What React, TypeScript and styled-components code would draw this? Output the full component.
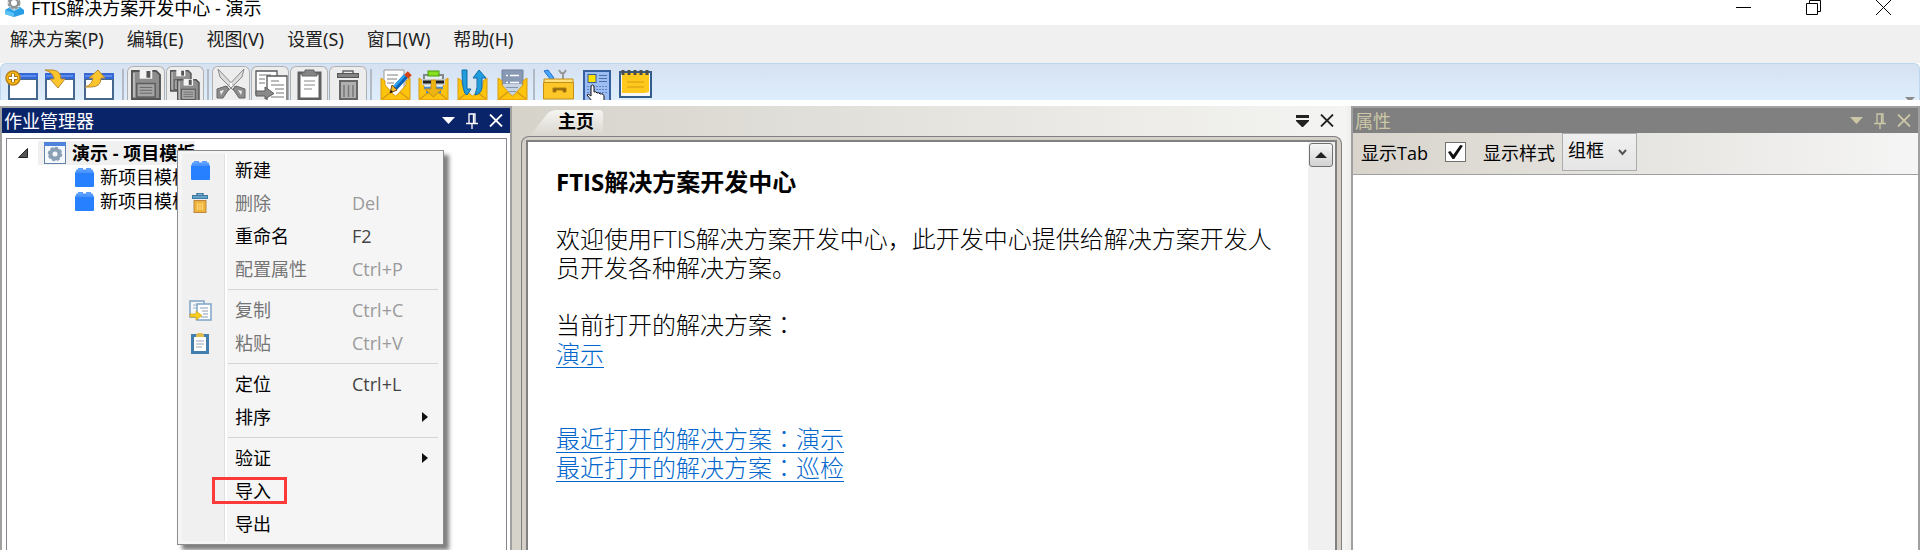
import React from "react";
import styled, { createGlobalStyle, css } from "styled-components";

const uiFont = `"Noto Sans", "Noto Sans CJK SC", sans-serif`;

const GlobalStyle = createGlobalStyle`
  *, *::before, *::after { box-sizing: border-box; }
  body {
    margin: 0;
    background: #fff;
    color: #000;
    font-family: "Open Sans", "Noto Sans CJK SC", sans-serif;
    font-size: 18px;
    line-height: 24px;
  }
  button, select, input { font: inherit; color: inherit; margin: 0; }
  svg { display: block; flex: none; }
`;

const Window = styled.div`
  display: flex;
  flex-direction: column;
  height: 100vh;
  overflow: hidden;
`;

const TitleBar = styled.header`
  display: flex;
  justify-content: space-between;
  align-items: flex-start;
  height: 25px;
  padding: 0 28px 0 4px;
`;

const Title = styled.h1`
  display: flex;
  align-items: center;
  gap: 5px;
  height: 17px;
  margin: 0;
  font-family: ${uiFont};
  font-size: 18px;
  font-weight: 400;
  line-height: 17px;
  white-space: pre;
`;

const WindowControls = styled.div`
  display: flex;
  gap: 54px;
`;

const IconButton = styled.button`
  display: flex;
  padding: 0;
  border: 0;
  background: none;
  color: inherit;
`;

const MenuBar = styled.nav`
  display: flex;
  gap: 23px;
  height: 38px;
  padding: 2px 10px 0;
  background: #f0f0f0;
  font-family: ${uiFont};
  flex: none;
`;

const MenuButton = styled.button`
  height: 24px;
  padding: 0;
  border: 0;
  background: none;
  color: #222;
`;

const Toolbar = styled.div`
  display: flex;
  height: 37px;
  padding: 0 2px;
  border: 1px solid #bdd7ee;
  border-bottom: 0;
  border-radius: 6px 6px 0 0;
  background: linear-gradient(#d6e1f1, #deeefc);
  overflow: hidden;
  flex: none;
`;

const ToolButton = styled.button<{ $off?: boolean }>`
  width: 39px;
  height: 42px;
  padding: 0;
  border: 0;
  background: none;
  flex: none;
  ${(p) =>
    p.$off &&
    css`
      svg {
        border-radius: 6px;
        margin-top: 2px;
        height: 40px;
        background: #ededed;
        box-shadow: inset 0 0 0 1px #b0b0b0;
      }
    `}
`;

const ToolDivider = styled.span`
  width: 2px;
  height: 31px;
  margin: 5px 3px 0 2px;
  background: #b3bac4;
  flex: none;
`;

const ToolOverflow = styled.span`
  margin: 33px 2px 0 auto;
  border: 5px solid transparent;
  border-top-color: #8a8a8a;
  align-self: flex-start;
`;

const Workspace = styled.main`
  display: flex;
  flex: 1;
  min-height: 0;
  margin-top: 6px;
  background: linear-gradient(90deg, #d6d3cb 27%, #f4f4f2 70%, #e6e4df 71%);
`;

const Panel = styled.section<{ $width: number }>`
  display: flex;
  flex-direction: column;
  width: ${(p) => p.$width}px;
  flex: none;
  border: 2px solid #a0a0a0;
  border-bottom: 0;
  background: #fff;
  position: relative;
`;

const PanelHeader = styled.div<{ $active?: boolean }>`
  display: flex;
  align-items: center;
  justify-content: space-between;
  height: 25px;
  padding: 0 7px 0 2px;
  color: ${(p) => (p.$active ? "#fff" : "#cbc7a6")};
  background: ${(p) => (p.$active ? "#0a246a" : "#808080")};
  flex: none;
`;

const PanelTitle = styled.h2`
  margin: 0;
  font-size: 18px;
  font-weight: 400;
  line-height: 24px;
`;

const PanelActions = styled.div`
  display: flex;
  align-items: center;
  gap: 11px;
`;

const Tree = styled.ul`
  flex: 1;
  margin: 5px 3px 0 4px;
  padding: 2px 0 0;
  border: 1px solid #828790;
  border-bottom: 0;
  list-style: none;
`;

const TreeRow = styled.li<{ $level: number }>`
  display: flex;
  align-items: center;
  gap: ${(p) => (p.$level ? 6 : 10)}px;
  height: 24px;
  padding-left: ${(p) => (p.$level ? 68 : 11)}px;
`;

const TreeLabel = styled.span`
  display: flex;
  align-items: center;
  gap: 6px;
  height: 24px;
  padding: 0 0 0 6px;
  background: #f0f0f0;
  font-weight: 700;
`;

const ContextMenu = styled.div`
  position: absolute;
  left: 175px;
  top: 42px;
  z-index: 2;
  width: 267px;
  padding: 3px 4px;
  border: 1px solid #8c8c8c;
  background: #f5f5f5;
  box-shadow: 5px 5px 4px rgba(0, 0, 0, 0.5);
`;

const MenuList = styled.div`
  background: linear-gradient(90deg, #f0f0f0 42px, #e0e0e0 42px, #e0e0e0 43px, #fff 43px, #fff 45px, #f5f5f5 45px);
`;

const MenuItem = styled.button<{ $disabled?: boolean }>`
  position: relative;
  display: grid;
  grid-template-columns: 53px 117px 1fr;
  align-items: center;
  width: 100%;
  height: 33px;
  padding: 0 0 1px;
  border: 0;
  background: none;
  text-align: left;
  color: ${(p) => (p.$disabled ? "#757575" : "#000")};
`;

const MenuIcon = styled.span`
  display: flex;
  justify-content: center;
  width: 36px;
`;

const Shortcut = styled.span<{ $disabled?: boolean }>`
  display: flex;
  color: ${(p) => (p.$disabled ? "#9a9a9a" : "#444")};
`;

const SubmenuArrow = styled.span`
  margin-left: 70px;
  border: 5px solid transparent;
  border-left: 6px solid #111;
  border-right: 0;
`;

const MenuSeparator = styled.hr`
  height: 1px;
  margin: 3px 1px 4px 46px;
  border: 0;
  background: #d4d4d4;
`;

const Highlight = styled.span`
  position: absolute;
  left: 30px;
  top: 2px;
  width: 75px;
  height: 27px;
  border: 3px solid #fc3a3a;
`;

const Documents = styled.section`
  display: flex;
  flex-direction: column;
  flex: 1;
  min-width: 0;
  padding: 0 9px;
`;

const TabStrip = styled.div`
  display: flex;
  align-items: center;
  justify-content: space-between;
  height: 30px;
  padding: 3px 8px 0 8px;
  flex: none;
`;

const Tab = styled.button`
  height: 27px;
  width: 75px;
  padding: 0 9px 4px 29px;
  border: 0;
  background: linear-gradient(#f7f6f4, #d9d6ce);
  clip-path: path("M0 28 L18 5 Q22 1 28 1 H70 Q74 1 74 5 V28 Z");
  font-weight: 700;
  text-align: left;
  white-space: nowrap;
`;

const DocumentActions = styled.div`
  display: flex;
  align-items: center;
  gap: 11px;
  padding-bottom: 4px;
  color: #222;
`;

const DocumentFrame = styled.div`
  display: flex;
  flex: 1;
  min-height: 0;
  padding: 3px 4px 0;
  border: 1px solid #808080;
  border-bottom: 0;
  border-radius: 8px 8px 0 0;
  background: #d4d0c8;
`;

const DocumentView = styled.div`
  display: flex;
  flex: 1;
  min-width: 0;
  border: 2px solid #808080;
  border-bottom: 0;
  background: #fff;
`;

const Article = styled.article`
  flex: 1;
  min-width: 0;
  padding: 25px 26px 0 28px;
  font-size: 24px;
  line-height: 29px;
  font-weight: 300;

  h2, p { margin: 0 0 28px; font-size: inherit; }
  h2 { font-weight: 700; }
  section { margin-bottom: 56px; }
  a {
    display: table;
    color: #0066cc;
    text-decoration-thickness: 1px;
    text-underline-offset: 4px;
  }
`;

const Colon = styled.span`
  font-family: "Noto Sans CJK TC", sans-serif;
  line-height: 0;
`;

const ScrollTrack = styled.div`
  width: 27px;
  padding: 0 1px;
  background: #f0f0f0;
  flex: none;
`;

const ScrollButton = styled.button`
  display: flex;
  align-items: center;
  justify-content: center;
  width: 24px;
  height: 24px;
  margin-top: 1px;
  padding: 0;
  border: 1px solid #707070;
  border-radius: 3px;
  background: linear-gradient(#f6f6f6, #d2d2d2);
`;

const PropertyBar = styled.form`
  display: flex;
  align-items: flex-start;
  height: 42px;
  padding: 0 8px;
  border-bottom: 1px solid #a0a0a0;
  background: linear-gradient(90deg, #d8d4cc, #f5f5f5);
  flex: none;
`;

const FieldLabel = styled.label`
  margin-top: 8px;
`;

const CheckBox = styled.input`
  appearance: none;
  width: 21px;
  height: 20px;
  margin: 9px 17px 0;
  border: 1px solid #707070;
  background: #fff;
  display: grid;
  place-items: center;

  &:checked::before {
    content: "";
    width: 15px;
    height: 14px;
    background: #111;
    clip-path: polygon(0 50%, 16% 42%, 36% 70%, 82% 0, 100% 6%, 42% 100%, 30% 100%);
  }
`;

const SelectBox = styled.span`
  display: grid;
  align-items: center;
  margin-left: 7px;

  & > * { grid-area: 1 / 1; }
  svg { justify-self: end; margin-right: 10px; pointer-events: none; }
`;

const Select = styled.select`
  appearance: none;
  width: 75px;
  height: 38px;
  padding: 0 5px 4px;
  border: 1px solid #acacac;
  border-radius: 0;
  background: linear-gradient(#f0f0f0, #e5e5e5);
`;

/* ---------- drawings ---------- */

const AppIcon = () => (
  <svg width="22" height="17" viewBox="0 0 22 17">
    <path d="M1 10 L6 7 H16 L20 10 V14 L10 17 L1 14Z" fill="#2a9fe6" />
    <path d="M1 10 L10 13 V17 L1 14Z" fill="#5cc1f5" />
    <path d="M5 8 L10 11 L16 8 L10 6Z" fill="#a9def8" />
    <circle cx="10" cy="3" r="5" fill="none" stroke="#9a9a9a" strokeWidth="3" strokeDasharray="3 1" />
    <circle cx="10" cy="3" r="4" fill="none" stroke="#8b8f92" strokeWidth="2" />
  </svg>
);

const MinimizeIcon = () => (
  <svg width="16" height="15" stroke="#000"><path d="M0 7.500H15" /></svg>
);
const RestoreIcon = () => (
  <svg width="16" height="15" fill="none" stroke="#000">
    <path d="M.5 3.500H11.500V14.500H.5ZM3.500 3V.5H14.500V11.500H12" />
  </svg>
);
const CloseWindowIcon = () => (
  <svg width="16" height="15" stroke="#000"><path d="M0 0L15 15M15 0L0 15" /></svg>
);

const DropIcon = () => (
  <svg width="13" height="7" fill="currentColor"><path d="M0 0H13L6.500 7Z" /></svg>
);
const PinIcon = () => (
  <svg width="12" height="16" fill="none" stroke="currentColor" strokeWidth="1.300">
    <path d="M3 10V1H9V10M0 10.500H12M6 11V16M7.500 1V10" />
  </svg>
);
const CloseIcon = () => (
  <svg width="14" height="13" stroke="currentColor" strokeWidth="1.800"><path d="M1 .5L13 12.500M13 .5L1 12.500" /></svg>
);
const TabListIcon = () => (
  <svg width="13" height="12" fill="currentColor"><path d="M0 0H13V3H0ZM0 5H13V6L7 12H6L0 6Z" /></svg>
);
const ScrollUpIcon = () => (
  <svg width="12" height="6" fill="#222"><path d="M0 6L6 0L12 6Z" /></svg>
);
const ChevronIcon = () => (
  <svg width="9" height="7" fill="none" stroke="#555" strokeWidth="2"><path d="M1 1L4.500 5L8 1" /></svg>
);
const ExpanderIcon = () => (
  <svg width="10" height="10"><path d="M9.500 .5V9.500H.5Z" fill="#555" stroke="#222" /></svg>
);

const ProjectIcon = () => (
  <svg width="22" height="22" viewBox="0 0 22 22">
    <rect x=".5" y=".5" width="21" height="21" fill="#f5f8fc" stroke="#6482a8" />
    <rect width="22" height="4" fill="#4f83dc" />
    <circle cx="11" cy="12" r="4.500" fill="none" stroke="#8aa0b4" strokeWidth="4" />
    <circle cx="11" cy="12" r="6.500" fill="none" stroke="#8aa0b4" strokeWidth="1.500" strokeDasharray="3 2" />
  </svg>
);
const BlockIcon = () => (
  <svg width="19" height="19" viewBox="0 0 19 19" fill="#2680ff">
    <path d="M0 5H19V18Q19 19 18 19H1Q0 19 0 18Z" />
    <path d="M0 5L1.500 1.500H17.500L19 5Z" fill="#4a95ff" />
    <path d="M3 0H8V3H3ZM11 0H16V3H11Z" fill="#5b9fff" />
  </svg>
);
const TrashIcon = () => (
  <svg width="16" height="20" viewBox="0 0 16 20">
    <path d="M5 2V.7H11V2" fill="none" stroke="#3d7ba5" strokeWidth="1.500" />
    <rect x=".5" y="2.500" width="15" height="3" fill="#66a3c7" stroke="#3d7ba5" />
    <rect x="2" y="7.500" width="12" height="12" fill="#f0b13c" stroke="#b98a3e" />
    <path d="M5.500 10V17M8 10V17M10.500 10V17" stroke="#fbd56e" strokeWidth="1.500" />
  </svg>
);
const CopyIcon = () => (
  <svg width="23" height="21" viewBox="0 0 23 21">
    <rect x="1" y="1" width="14" height="16" fill="#f4f8fb" stroke="#86a8c8" strokeWidth="1.600" />
    <path d="M4 5H10M4 8H8" stroke="#9ab2c6" />
    <rect x="8" y="4" width="14" height="16" fill="#fff" stroke="#86a8c8" strokeWidth="1.600" />
    <path d="M11 8H19M13 11H19M14 14H19M12 17H19" stroke="#8a9cac" />
    <path d="M1 14H7V11L13 15.500L7 20V17H1Z" fill="#f7cf1c" stroke="#cfa018" strokeWidth=".7" />
  </svg>
);
const PasteIcon = () => (
  <svg width="18" height="21" viewBox="0 0 18 21">
    <rect x="1.500" y="2.500" width="15" height="17" fill="#fff" stroke="#427fae" strokeWidth="3" />
    <path d="M5 4V2L7 0H11L13 2V4Z" fill="#e0bd4c" />
    <path d="M5 8H13M5 11H13M5 14H11" stroke="#9aa6b2" />
  </svg>
);

const ToolSvg = ({ children }: { children: React.ReactNode }) => (
  <svg width="38" height="42" viewBox="0 0 38 42">{children}</svg>
);
/* Greyed buttons start two pixels lower, so their drawing is raised to match. */
const OffSvg = ({ children }: { children: React.ReactNode }) => (
  <svg width="38" height="40" viewBox="0 2 38 40">{children}</svg>
);

const MiniWindow = ({ x }: { x: number }) => (
  <>
    <path d={`M${x + 1} 15V35H${x + 29}V15Z`} fill="#fff" stroke="#46688c" strokeWidth="2" />
    <rect x={x} y="9" width="30" height="6" fill="#3568d4" />
    <rect x={x + 1} y="11" width="27" height="2" fill="#5a8cf0" />
  </>
);
const Disk = ({ x, y, s }: { x: number; y: number; s: number }) => (
  <g transform={`translate(${x} ${y}) scale(${s / 30})`}>
    <path d="M1 1H26L30 5V30H1Z" fill="#8d8d8d" stroke="#555" strokeWidth="2" />
    <path d="M3 3V28" stroke="#bbb" strokeWidth="2" />
    <rect x="9" y="0" width="13" height="9" fill="#f4f4f4" />
    <rect x="16" y="1" width="4" height="7" fill="#555" />
    <rect x="6" y="14" width="19" height="14" fill="#a5a5a5" stroke="#5c5c5c" strokeWidth="1.500" />
    <path d="M9 18H22M9 21H22M9 24H22" stroke="#666" />
  </g>
);
const Envelope = ({ x }: { x: number }) => (
  <g transform={`translate(${x} 0)`}>
    <path d="M0 14L4 17V21L12 30L14.500 32L17 30L25 21V17L29 14V40H0Z" fill="#fdc40d" stroke="#d79b12" />
    <path d="M1 35L10 28M28 35L19 28" fill="none" stroke="#d79b12" strokeWidth="1.500" />
    <path d="M0 35H29V40H0Z" fill="#ecaa10" />
  </g>
);

const NewTool = () => (
  <ToolSvg>
    <MiniWindow x={5} />
    <circle cx="10" cy="14" r="7" fill="#fbb917" stroke="#b98218" strokeWidth="1.500" />
    <path d="M10 9.500V18.500M5.500 14H14.500" stroke="#a27320" strokeWidth="4" />
    <path d="M10 10V18M6 14H14" stroke="#fff" strokeWidth="2" />
  </ToolSvg>
);
const OpenTool = () => (
  <ToolSvg>
    <MiniWindow x={3} />
    <path d="M3 6H11Q19 7 19 15H23L16 24L8 15H12Q12 9 3 6Z" fill="#fcc52d" stroke="#b98832" />
  </ToolSvg>
);
const ExportTool = () => (
  <ToolSvg>
    <MiniWindow x={3} />
    <path d="M4 23Q11 21 12 14H8L17 6L24 14H20Q20 23 10 23Z" fill="#fcc52d" stroke="#b98832" />
  </ToolSvg>
);
const SaveTool = () => <OffSvg><Disk x={4} y={6} s={29} /></OffSvg>;
const SaveAllTool = () => (
  <OffSvg>
    <Disk x={4} y={6} s={21} />
    <Disk x={11} y={15} s={22} />
  </OffSvg>
);
const CutTool = () => (
  <OffSvg>
    <path d="M6 5L8 13L21 26L24 24ZM32 5L30 13L17 26L14 24Z" fill="#ddd" stroke="#888" />
    <path d="M5 25L14 22L17 25L11 34H5ZM33 25L24 22L21 25L27 34H33Z" fill="#8c8c8c" stroke="#666" />
    <path d="M8 27L12 26L9 31ZM30 27L26 26L29 31Z" fill="#eee" />
    <circle cx="19" cy="20" r="1.500" fill="#fff" />
  </OffSvg>
);
const CopyTool = () => (
  <OffSvg>
    <path d="M5 7H26V30H5Z" fill="#fff" stroke="#555" strokeWidth="1.300" />
    <path d="M8 11H20M8 15H14M8 19H14" stroke="#777" />
    <path d="M16 12H36V40H16Z" fill="#fff" stroke="#555" strokeWidth="1.300" />
    <path d="M20 17H28M20 21H33M24 25H33M25 29H33M20 33H33" stroke="#777" />
    <path d="M5 27H14V23L23 29.500L14 35V32H5Z" fill="#8a8a8a" stroke="#5d5d5d" />
  </OffSvg>
);
const PasteTool = () => (
  <OffSvg>
    <rect x="9" y="9" width="21" height="26" fill="#fff" stroke="#606060" strokeWidth="3" />
    <path d="M12 12V9L15 8V6H24V8L27 9V12Z" fill="#858585" stroke="#666" />
    <path d="M14 17H25M14 21H25M14 25H22" stroke="#888" />
  </OffSvg>
);
const TrashTool = () => (
  <OffSvg>
    <path d="M14 9V7H24V9" fill="none" stroke="#666" strokeWidth="1.500" />
    <rect x="8.500" y="9.500" width="21" height="4" fill="#858585" stroke="#555" />
    <rect x="11" y="17" width="17" height="18" fill="#b0b0b0" stroke="#666" strokeWidth="2" />
    <path d="M15 21V33M19.500 21V33M24 21V33" stroke="#777" strokeWidth="1.500" />
  </OffSvg>
);
const EditTool = () => (
  <ToolSvg>
    <path d="M9 6H29V36H9Z" fill="#fff" stroke="#999" />
    <path d="M12 11H23M12 15H22M12 19H19" stroke="#aaa" strokeWidth="1.500" />
    <Envelope x={6} />
    <path d="M31 12L20 24" stroke="#0b63b8" strokeWidth="5.500" />
    <path d="M30 11L19 23" stroke="#2da3ee" strokeWidth="2.500" />
    <path d="M31 9L35 13" stroke="#d54311" strokeWidth="5" />
    <path d="M17 21L22 26L15 29Z" fill="#efb82b" stroke="#7a4b12" />
    <path d="M15 29L16 26L18 28Z" fill="#111" />
  </ToolSvg>
);
const PublishTool = () => (
  <ToolSvg>
    <rect x="10" y="12" width="20" height="20" fill="#e4ecf5" />
    <Envelope x={5} />
    <path d="M10 24H29M12 28H27" stroke="#4d8ccf" strokeWidth="2.500" />
    <path d="M17 16H22V25H28L19.500 33L11 25H17Z" fill="#eeb413" stroke="#c88e0e" />
    <path d="M10 17V11H29V17" fill="none" stroke="#82878b" strokeWidth="2" />
    <path d="M8 18H17M22 18H31" stroke="#c9ccce" strokeWidth="6" />
    <path d="M9 18H17M22 18H30" stroke="#222" strokeWidth="3" />
    <rect x="14" y="7" width="11" height="5" fill="#86df1f" stroke="#4c9a0c" />
  </ToolSvg>
);
const SyncTool = () => (
  <ToolSvg>
    <path d="M10 15H31V30H10Z" fill="#d9e6f0" />
    <Envelope x={5} />
    <path d="M9 6H14V25H18L14 31Q9 30 9 6Z" fill="#219cdd" stroke="#0f6da8" />
    <path d="M26 6L33 14H29V24Q28 30 22 31Q25 24 24 14H20Z" fill="#219cdd" stroke="#0f6da8" />
  </ToolSvg>
);
const ListTool = () => (
  <ToolSvg>
    <path d="M10 6H31V34H10Z" fill="#8799b5" stroke="#73839a" />
    <path d="M11 20H30V34H11Z" fill="#c8d4e2" />
    <path d="M14 11.500H16M18 11.500H27M14 18.500H16M18 18.500H27" stroke="#fff" strokeWidth="1.500" />
    <path d="M14 23.500H26M17 27.500H24" stroke="#8797ab" />
    <Envelope x={6} />
  </ToolSvg>
);
const ToolboxTool = () => (
  <ToolSvg>
    <path d="M6 7L10 6L16 14L13 16Z" fill="#48a6ff" stroke="#1d6fce" />
    <path d="M21 6L23 9H26L28 6M25 9V18" fill="none" stroke="#999" strokeWidth="2" />
    <path d="M6 15H35V20H6Z" fill="#ffe07b" stroke="#c48f15" />
    <path d="M5.500 18.500H35.500V35H5.500Z" fill="#fdc72a" stroke="#c48f15" />
    <path d="M15 24H28V28H25V26H18V28H15Z" fill="#8c6513" stroke="#b17e0c" />
  </ToolSvg>
);
const DesignTool = () => (
  <ToolSvg>
    <path d="M7 7H33V40H7Z" fill="#9cbcf4" stroke="#355f9e" strokeWidth="2" />
    <rect x="11" y="10.500" width="8" height="8" fill="#ffe100" stroke="#375b94" />
    <path d="M22 11.500H30M22 14.500H30M22 17.500H30" stroke="#4e6fa6" />
    <path d="M10 22.500H30M10 25.500H30M10 28.500H30" stroke="#6787c4" strokeDasharray="2 1" />
    <path d="M14 23Q14 21 15.500 21Q17 21 17 23V28Q19 27 20 29Q22 28 23 30Q27 29 27 33V37H15L10 31Q11 29 14 32Z" fill="#fff" stroke="#111" />
  </ToolSvg>
);
const NotesTool = () => (
  <ToolSvg>
    <path d="M4 8H35V33H4Z" fill="#f4f6f8" stroke="#315c8c" strokeWidth="2" />
    <path d="M6 9H33V28L29 29L6 29Z" fill="#ffc81c" />
    <path d="M11 18H28M11 23H28" stroke="#d49c10" />
    <path d="M7 6V11M13 6V11M19 6V11M25 6V11M31 6V11" stroke="#4d4d4d" strokeWidth="3" />
  </ToolSvg>
);

/* ---------- data ---------- */

type Tool = { name: string; Icon: () => React.JSX.Element; off?: boolean };

const toolGroups: Tool[][] = [
  [
    { name: "新建解决方案", Icon: NewTool },
    { name: "打开解决方案", Icon: OpenTool },
    { name: "导出解决方案", Icon: ExportTool },
  ],
  [
    { name: "保存", Icon: SaveTool, off: true },
    { name: "全部保存", Icon: SaveAllTool, off: true },
  ],
  [
    { name: "剪切", Icon: CutTool, off: true },
    { name: "复制", Icon: CopyTool, off: true },
    { name: "粘贴", Icon: PasteTool, off: true },
    { name: "删除", Icon: TrashTool, off: true },
  ],
  [
    { name: "编辑", Icon: EditTool },
    { name: "发布", Icon: PublishTool },
    { name: "同步", Icon: SyncTool },
    { name: "列表", Icon: ListTool },
  ],
  [
    { name: "工具箱", Icon: ToolboxTool },
    { name: "设计", Icon: DesignTool },
    { name: "记事", Icon: NotesTool },
  ],
];

const menus = ["解决方案(P)", "编辑(E)", "视图(V)", "设置(S)", "窗口(W)", "帮助(H)"];

type Entry = {
  label: string;
  Icon?: () => React.JSX.Element;
  keys?: string;
  disabled?: boolean;
  submenu?: boolean;
  marked?: boolean;
};

const contextGroups: Entry[][] = [
  [
    { label: "新建", Icon: BlockIcon },
    { label: "删除", Icon: TrashIcon, keys: "Del", disabled: true },
    { label: "重命名", keys: "F2" },
    { label: "配置属性", keys: "Ctrl+P", disabled: true },
  ],
  [
    { label: "复制", Icon: CopyIcon, keys: "Ctrl+C", disabled: true },
    { label: "粘贴", Icon: PasteIcon, keys: "Ctrl+V", disabled: true },
  ],
  [
    { label: "定位", keys: "Ctrl+L" },
    { label: "排序", submenu: true },
  ],
  [
    { label: "验证", submenu: true },
    { label: "导入", marked: true },
    { label: "导出" },
  ],
];

const HeaderActions = () => (
  <PanelActions>
    <IconButton aria-label="菜单"><DropIcon /></IconButton>
    <IconButton aria-label="固定"><PinIcon /></IconButton>
    <IconButton aria-label="关闭"><CloseIcon /></IconButton>
  </PanelActions>
);

export default function App() {
  return (
    <Window>
      <GlobalStyle />
      <TitleBar>
        <Title>
          <AppIcon />
          FTIS解决方案开发中心 - 演示
        </Title>
        <WindowControls>
          <IconButton aria-label="最小化"><MinimizeIcon /></IconButton>
          <IconButton aria-label="还原"><RestoreIcon /></IconButton>
          <IconButton aria-label="关闭"><CloseWindowIcon /></IconButton>
        </WindowControls>
      </TitleBar>

      <MenuBar>
        {menus.map((m) => <MenuButton key={m}>{m}</MenuButton>)}
      </MenuBar>

      <Toolbar role="toolbar">
        {toolGroups.map((group, i) => (
          <React.Fragment key={i}>
            {i > 0 && <ToolDivider />}
            {group.map(({ name, Icon, off }) => (
              <ToolButton key={name} aria-label={name} $off={off}><Icon /></ToolButton>
            ))}
          </React.Fragment>
        ))}
        <ToolOverflow />
      </Toolbar>

      <Workspace>
        <Panel $width={512}>
          <PanelHeader $active>
            <PanelTitle>作业管理器</PanelTitle>
            <HeaderActions />
          </PanelHeader>
          <Tree>
            <TreeRow $level={0}>
              <ExpanderIcon />
              <TreeLabel><ProjectIcon />演示 - 项目模板</TreeLabel>
            </TreeRow>
            <TreeRow $level={1}><BlockIcon />新项目模板1</TreeRow>
            <TreeRow $level={1}><BlockIcon />新项目模板2</TreeRow>
          </Tree>
          <ContextMenu role="menu">
            <MenuList>
              {contextGroups.map((group, i) => (
                <React.Fragment key={i}>
                  {i > 0 && <MenuSeparator />}
                  {group.map(({ label, Icon, keys, disabled, submenu, marked }) => (
                    <MenuItem key={label} role="menuitem" $disabled={disabled}>
                      <MenuIcon>{Icon && <Icon />}</MenuIcon>
                      <span>{label}</span>
                      <Shortcut $disabled={disabled}>
                        {keys}
                        {submenu && <SubmenuArrow />}
                      </Shortcut>
                      {marked && <Highlight />}
                    </MenuItem>
                  ))}
                </React.Fragment>
              ))}
            </MenuList>
          </ContextMenu>
        </Panel>

        <Documents>
          <TabStrip>
            <Tab>主页</Tab>
            <DocumentActions>
              <IconButton aria-label="文档列表"><TabListIcon /></IconButton>
              <IconButton aria-label="关闭"><CloseIcon /></IconButton>
            </DocumentActions>
          </TabStrip>
          <DocumentFrame>
            <DocumentView>
              <Article>
                <h2>FTIS解决方案开发中心</h2>
                <p>欢迎使用FTIS解决方案开发中心，此开发中心提供给解决方案开发人员开发各种解决方案。</p>
                <section>
                  当前打开的解决方案<Colon>：</Colon>
                  <a href="#demo">演示</a>
                </section>
                <a href="#recent-demo">最近打开的解决方案<Colon>：</Colon>演示</a>
                <a href="#recent-patrol">最近打开的解决方案<Colon>：</Colon>巡检</a>
              </Article>
              <ScrollTrack>
                <ScrollButton aria-label="向上滚动"><ScrollUpIcon /></ScrollButton>
              </ScrollTrack>
            </DocumentView>
          </DocumentFrame>
        </Documents>

        <Panel $width={569}>
          <PanelHeader>
            <PanelTitle>属性</PanelTitle>
            <HeaderActions />
          </PanelHeader>
          <PropertyBar>
            <FieldLabel htmlFor="show-tab">显示Tab</FieldLabel>
            <CheckBox id="show-tab" type="checkbox" defaultChecked />
            <FieldLabel htmlFor="show-style">显示样式</FieldLabel>
            <SelectBox>
              <Select id="show-style" defaultValue="group">
                <option value="group">组框</option>
              </Select>
              <ChevronIcon />
            </SelectBox>
          </PropertyBar>
        </Panel>
      </Workspace>
    </Window>
  );
}
